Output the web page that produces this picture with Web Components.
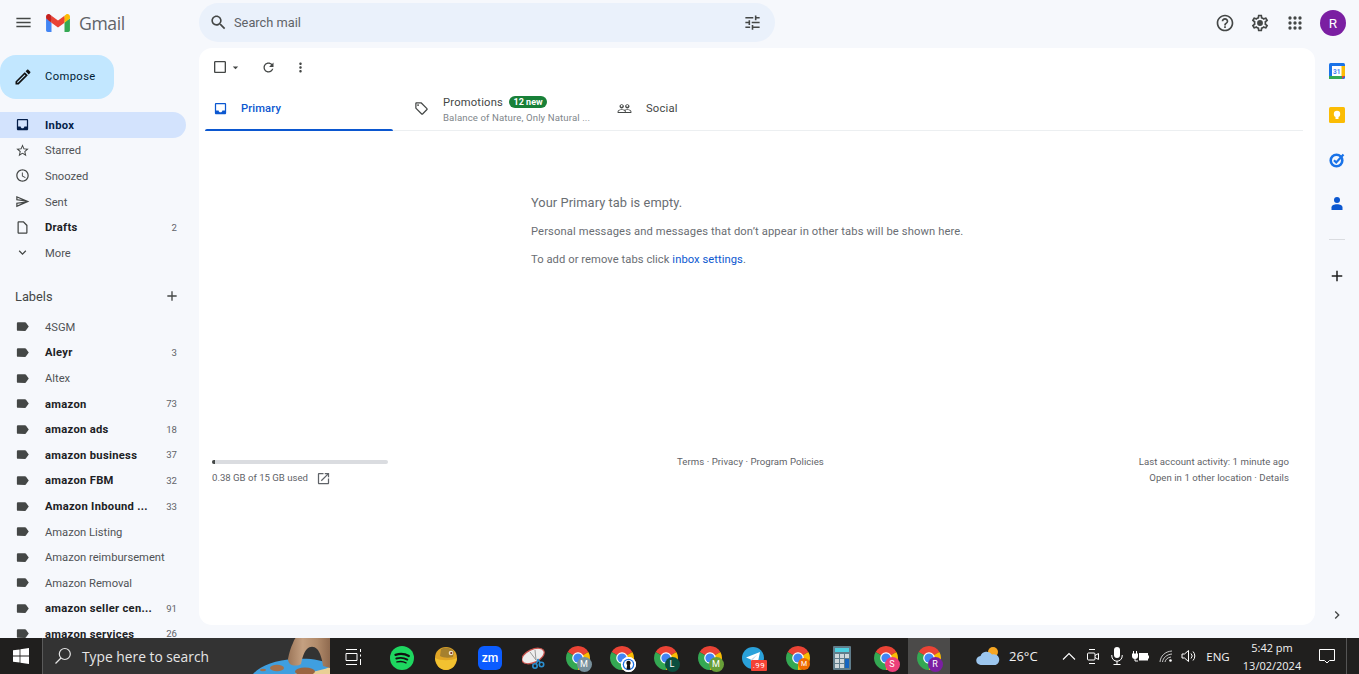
<!DOCTYPE html>
<html lang="en">
<head>
<meta charset="utf-8">
<title>Inbox - Gmail</title>
<style>
html, body { margin: 0; height: 100%; overflow: hidden; background: #f6f8fc; }
body { font-family: Roboto, "Liberation Sans", sans-serif; }
</style>
</head>
<body>
<gmail-shell>
  <app-header slot="header"></app-header>
  <side-bar slot="side"></side-bar>
  <mail-card slot="main"></mail-card>
  <right-rail slot="rail"></right-rail>
</gmail-shell>
<task-bar></task-bar>

<script>
const ICONS = {
  menu: "M3 18h18v-2H3v2zm0-5h18v-2H3v2zm0-7v2h18V6H3z",
  search: "M15.5 14h-.79l-.28-.27C15.41 12.59 16 11.11 16 9.5 16 5.91 13.09 3 9.5 3S3 5.91 3 9.5 5.91 16 9.5 16c1.61 0 3.09-.59 4.23-1.57l.27.28v.79l5 4.99L20.49 19l-4.99-5zm-6 0C7.01 14 5 11.99 5 9.5S7.01 5 9.5 5 14 7.01 14 9.5 11.99 14 9.5 14z",
  tune: "M3 17v2h6v-2H3zM3 5v2h10V5H3zm10 16v-2h8v-2h-8v-2h-2v6h2zM7 9v2H3v2h4v2h2V9H7zm14 4v-2H11v2h10zm-6-4h2V7h4V5h-4V3h-2v6z",
  help: "M11 18h2v-2h-2v2zm1-16C6.48 2 2 6.48 2 12s4.48 10 10 10 10-4.48 10-10S17.52 2 12 2zm0 18c-4.41 0-8-3.59-8-8s3.59-8 8-8 8 3.59 8 8-3.59 8-8 8zm0-14c-2.21 0-4 1.79-4 4h2c0-1.1.9-2 2-2s2 .9 2 2c0 2-3 1.75-3 5h2c0-2.25 3-2.5 3-5 0-2.21-1.79-4-4-4z",
  settings: "M19.43 12.98c.04-.32.07-.64.07-.98 0-.34-.03-.66-.07-.98l2.11-1.65c.19-.15.24-.42.12-.64l-2-3.46c-.09-.16-.26-.25-.44-.25-.06 0-.12.01-.17.03l-2.49 1c-.52-.4-1.08-.73-1.69-.98l-.38-2.65C14.46 2.18 14.25 2 14 2h-4c-.25 0-.46.18-.49.42l-.38 2.65c-.61.25-1.17.59-1.69.98l-2.49-1c-.06-.02-.12-.03-.18-.03-.17 0-.34.09-.43.25l-2 3.46c-.13.22-.07.49.12.64l2.11 1.65c-.04.32-.07.65-.07.98 0 .33.03.66.07.98l-2.11 1.65c-.19.15-.24.42-.12.64l2 3.46c.09.16.26.25.44.25.06 0 .12-.01.17-.03l2.49-1c.52.4 1.08.73 1.69.98l.38 2.65c.03.24.24.42.49.42h4c.25 0 .46-.18.49-.42l.38-2.65c.61-.25 1.17-.59 1.69-.98l2.49 1c.06.02.12.03.18.03.17 0 .34-.09.43-.25l2-3.46c.12-.22.07-.49-.12-.64l-2.11-1.65zm-1.98-1.71c.04.31.05.52.05.73 0 .21-.02.43-.05.73l-.14 1.13.89.7 1.08.84-.7 1.21-1.27-.51-1.04-.42-.9.68c-.43.32-.84.56-1.25.73l-1.06.43-.16 1.13-.2 1.35h-1.4l-.19-1.35-.16-1.13-1.06-.43c-.43-.18-.83-.41-1.23-.71l-.91-.7-1.06.43-1.27.51-.7-1.21 1.08-.84.89-.7-.14-1.13c-.03-.31-.05-.54-.05-.74s.02-.43.05-.73l.14-1.13-.89-.7-1.08-.84.7-1.21 1.27.51 1.04.42.9-.68c.43-.32.84-.56 1.25-.73l1.06-.43.16-1.13.2-1.35h1.39l.19 1.35.16 1.13 1.06.43c.43.18.83.41 1.23.71l.91.7 1.06-.43 1.27-.51.7 1.21-1.07.85-.89.7.14 1.13zM12 8.5a3.5 3.5 0 1 0 0 7 3.5 3.5 0 0 0 0-7z",
  apps: "M6 4a2 2 0 1 0 0 4 2 2 0 0 0 0-4zm6 0a2 2 0 1 0 0 4 2 2 0 0 0 0-4zm6 0a2 2 0 1 0 0 4 2 2 0 0 0 0-4zM6 10a2 2 0 1 0 0 4 2 2 0 0 0 0-4zm6 0a2 2 0 1 0 0 4 2 2 0 0 0 0-4zm6 0a2 2 0 1 0 0 4 2 2 0 0 0 0-4zM6 16a2 2 0 1 0 0 4 2 2 0 0 0 0-4zm6 0a2 2 0 1 0 0 4 2 2 0 0 0 0-4zm6 0a2 2 0 1 0 0 4 2 2 0 0 0 0-4z",
  edit: "M14.06 9.02l.92.92L5.92 19H5v-.92l9.06-9.06M17.66 3c-.25 0-.51.1-.7.29l-1.83 1.83 3.75 3.75 1.83-1.83c.39-.39.39-1.02 0-1.41l-2.34-2.34c-.2-.2-.45-.29-.71-.29zm-3.6 3.19L3 17.25V21h3.75L17.81 9.94l-3.75-3.75z",
  inbox: "M19 3H4.99c-1.1 0-1.98.9-1.98 2L3 19c0 1.1.89 2 1.99 2H19c1.1 0 2-.9 2-2V5c0-1.1-.9-2-2-2zm0 12h-4c0 1.66-1.35 3-3 3s-3-1.34-3-3H4.99V5H19v10z",
  star: "M22 9.24l-7.19-.62L12 2 9.19 8.63 2 9.24l5.46 4.73L5.82 21 12 17.27 18.18 21l-1.63-7.03L22 9.24zM12 15.4l-3.76 2.27 1-4.28-3.32-2.88 4.38-.38L12 6.1l1.71 4.04 4.38.38-3.32 2.88 1 4.28L12 15.4z",
  clock: "M11.99 2C6.47 2 2 6.48 2 12s4.47 10 9.99 10C17.52 22 22 17.52 22 12S17.52 2 11.99 2zM12 20c-4.42 0-8-3.58-8-8s3.58-8 8-8 8 3.58 8 8-3.58 8-8 8zm.5-13H11v6l5.25 3.15.75-1.23-4.5-2.67z",
  send: "M4.01 6.03l7.51 3.22-7.52-1 .01-2.22m7.5 8.72L4 17.97v-2.22l7.51-1M2.01 3L2 10l15 2-15 2 .01 7L23 12 2.01 3z",
  draft: "M14 2H6c-1.1 0-1.99.9-1.99 2L4 20c0 1.1.89 2 1.99 2H18c1.1 0 2-.9 2-2V8l-6-6zm4 18H6V4h7l5 5v11z",
  more: "M16.59 8.59L12 13.17 7.41 8.59 6 10l6 6 6-6z",
  label: "M17.63 5.84C17.27 5.33 16.67 5 16 5L5 5.01C3.9 5.01 3 5.9 3 7v10c0 1.1.9 1.99 2 1.99L16 19c.67 0 1.27-.33 1.63-.84L22 12l-4.37-6.16z",
  add: "M19 13h-6v6h-2v-6H5v-2h6V5h2v6h6v2z",
  refresh: "M17.65 6.35C16.2 4.9 14.21 4 12 4c-4.42 0-7.99 3.58-7.99 8s3.57 8 7.99 8c3.73 0 6.84-2.55 7.73-6h-2.08c-.82 2.33-3.04 4-5.65 4-3.31 0-6-2.69-6-6s2.69-6 6-6c1.66 0 3.14.69 4.22 1.78L13 11h7V4l-2.35 2.35z",
  dots: "M12 8c1.1 0 2-.9 2-2s-.9-2-2-2-2 .9-2 2 .9 2 2 2zm0 2c-1.1 0-2 .9-2 2s.9 2 2 2 2-.9 2-2-.9-2-2-2zm0 6c-1.1 0-2 .9-2 2s.9 2 2 2 2-.9 2-2-.9-2-2-2z",
  check: "M19 5v14H5V5h14m0-2H5c-1.1 0-2 .9-2 2v14c0 1.1.9 2 2 2h14c1.1 0 2-.9 2-2V5c0-1.1-.9-2-2-2z",
  caret: "M7 10l5 5 5-5z",
  tag: "M21.41 11.58l-9-9C12.05 2.22 11.55 2 11 2H4c-1.1 0-2 .9-2 2v7c0 .55.22 1.05.59 1.42l9 9c.36.36.86.58 1.41.58.55 0 1.05-.22 1.41-.59l7-7c.37-.36.59-.86.59-1.41 0-.55-.23-1.06-.59-1.42zM13 20.01L4 11V4h7v-.01l9 9-7 7.02zM6.5 5a1.5 1.5 0 1 0 0 3 1.5 1.5 0 0 0 0-3z",
  people: "M16.5 13c-1.2 0-3.07.34-4.5 1-1.43-.67-3.3-1-4.5-1C5.33 13 1 14.08 1 16.25V19h22v-2.75c0-2.17-4.33-3.25-6.5-3.25zm-4 4.5h-10v-1.25c0-.54 2.56-1.75 5-1.75s5 1.21 5 1.75v1.25zm9 0H14v-1.25c0-.46-.2-.86-.52-1.22.88-.3 1.96-.53 3.02-.53 2.44 0 5 1.21 5 1.75v1.25zM7.5 12c1.93 0 3.5-1.57 3.5-3.5S9.43 5 7.5 5 4 6.57 4 8.5 5.57 12 7.5 12zm0-5.5c.83 0 1.5.67 1.5 1.5s-.67 1.5-1.5 1.5S6 8.83 6 8s.67-1.5 1.5-1.5zm9 5.5c1.93 0 3.5-1.57 3.5-3.5S18.43 5 16.5 5 13 6.57 13 8.5s1.57 3.5 3.5 3.5zm0-5.5c.83 0 1.5.67 1.5 1.5s-.67 1.5-1.5 1.5S15 8.83 15 8s.67-1.5 1.5-1.5z",
  launch: "M19 19H5V5h7V3H5c-1.11 0-2 .9-2 2v14c0 1.1.89 2 2 2h14c1.1 0 2-.9 2-2v-7h-2v7zM14 3v2h3.59l-9.83 9.83 1.41 1.41L19 6.41V10h2V3h-7z",
  chevron: "M10 6L8.59 7.41 13.17 12l-4.58 4.59L10 18l6-6z"
};

class GmIcon extends HTMLElement {
  connectedCallback() {
    const size = this.getAttribute("size") || 15;
    const d = ICONS[this.getAttribute("name")];
    this.attachShadow({ mode: "open" }).innerHTML = `
<style>
:host { display: inline-flex; flex: none; width: ${size}px; height: ${size}px; }
svg { width: 100%; height: 100%; fill: currentColor; display: block; }
</style>
<svg viewBox="0 0 24 24"><path d="${d}"/></svg>`;
  }
}
customElements.define("gm-icon", GmIcon);

class GmailShell extends HTMLElement {
  constructor() {
    super();
    this.attachShadow({ mode: "open" }).innerHTML = `
<style>
:host { display: flex; flex-direction: column; height: 638px; overflow: hidden; background: #f6f8fc; }
.body { flex: 1; min-height: 0; display: flex; }
</style>
<slot name="header"></slot>
<div class="body">
  <slot name="side"></slot>
  <slot name="main"></slot>
  <slot name="rail"></slot>
</div>`;
  }
}
customElements.define("gmail-shell", GmailShell);

class AppHeader extends HTMLElement {
  constructor() {
    super();
    this.attachShadow({ mode: "open" }).innerHTML = `
<style>
:host { display: flex; flex: none; height: 48px; align-items: flex-start; color: #444746; }
.brand { width: 199px; height: 45px; flex: none; display: flex; align-items: center; padding-left: 14px; box-sizing: border-box; }
.logo { width: 24px; height: 18px; margin-left: 13px; }
.word { font: 400 17.6px "Open Sans", Roboto, sans-serif; color: #5f6368; margin-left: 9px; letter-spacing: -0.4px; }
.search { width: 576px; height: 39px; margin-top: 3px; border-radius: 20px; background: #eaf1fb; display: flex; align-items: center; padding: 0 13px 0 10px; box-sizing: border-box; }
.search span { font-size: 12.8px; color: #5f6368; margin-left: 6px; flex: 1; }
.actions { margin-left: auto; display: flex; align-items: center; height: 45px; padding-right: 13px; }
.actions gm-icon { margin-right: 15px; }
.actions gm-icon:last-of-type { margin-right: 15px; }
.avatar { width: 26px; height: 26px; border-radius: 50%; background: #7b1fa2; color: #fff; display: flex; align-items: center; justify-content: center; font-size: 13.5px; }
</style>
<div class="brand">
  <gm-icon name="menu" size="19"></gm-icon>
  <svg class="logo" viewBox="0 0 256 193">
    <path fill="#4285F4" d="M58.182 192.05V93.14L27.507 65.077 0 49.504v125.091c0 9.658 7.825 17.455 17.455 17.455h40.727z"/>
    <path fill="#34A853" d="M197.818 192.05h40.727c9.659 0 17.455-7.826 17.455-17.455V49.505l-31.156 17.837-27.026 25.798v98.91z"/>
    <path fill="#EA4335" d="M58.182 93.14l-4.174-38.647 4.174-36.989L128 69.868l69.818-52.364 4.669 34.992-4.669 40.644L128 145.504z"/>
    <path fill="#FBBC04" d="M197.818 17.504V93.14L256 49.504V26.231c0-21.585-24.64-33.89-41.89-20.945l-16.292 12.218z"/>
    <path fill="#C5221F" d="M0 49.504l26.759 20.07L58.182 93.14V17.504L41.89 5.286C24.61-7.66 0 4.646 0 26.23v23.273z"/>
  </svg>
  <span class="word">Gmail</span>
</div>
<div class="search">
  <gm-icon name="search" size="19"></gm-icon>
  <span>Search mail</span>
  <gm-icon name="tune" size="19"></gm-icon>
</div>
<div class="actions">
  <gm-icon name="help" size="20"></gm-icon>
  <gm-icon name="settings" size="20"></gm-icon>
  <gm-icon name="apps" size="20"></gm-icon>
  <div class="avatar">R</div>
</div>`;
  }
}
customElements.define("app-header", AppHeader);

class NavItem extends HTMLElement {
  connectedCallback() {
    const count = this.getAttribute("count") || "";
    this.attachShadow({ mode: "open" }).innerHTML = `
<style>
:host { display: flex; flex: none; align-items: center; height: 25.6px; width: 186px; box-sizing: border-box; padding: 0 9px 0 15px; font-size: 11.2px; color: #505356; border-radius: 0 13px 13px 0; }
:host([bold]) { font-weight: 700; color: #202124; }
:host([bold]) .text { letter-spacing: 0.3px; }
:host([active]) { background: #d3e3fd; color: #041e49; }
.text { margin-left: 15px; flex: 1; white-space: nowrap; padding-top: 1px; }
.count { font-size: 9.6px; font-weight: 400; color: #5f6368; }
gm-icon { color: #444746; }
:host([active]) gm-icon { color: #041e49; }
</style>
<gm-icon name="${this.getAttribute("icon")}"></gm-icon>
<span class="text"><slot></slot></span>
<span class="count">${count}</span>`;
  }
}
customElements.define("nav-item", NavItem);

class SideBar extends HTMLElement {
  constructor() {
    super();
    this.attachShadow({ mode: "open" }).innerHTML = `
<style>
:host { display: block; flex: none; width: 199px; overflow: hidden; color: #444746; }
.compose { width: 114px; height: 44px; margin-top: 7px; margin-bottom: 13px; border-radius: 16px; background: #c2e7ff; display: flex; align-items: center; padding-left: 15px; box-sizing: border-box; color: #001d35; font-size: 11.2px; letter-spacing: 0.4px; }
.compose span { margin-left: 15px; margin-top: -2px; }
.heading { display: flex; align-items: center; justify-content: space-between; height: 26px; margin-top: 17.5px; margin-bottom: 5px; width: 186px; box-sizing: border-box; padding: 0 6px 0 15px; font-size: 12.8px; }
</style>
<div class="compose"><gm-icon name="edit" size="20" style="margin-left:-2px;margin-right:-3px;color:#111"></gm-icon><span>Compose</span></div>
<nav-item icon="inbox" bold active>Inbox</nav-item>
<nav-item icon="star">Starred</nav-item>
<nav-item icon="clock">Snoozed</nav-item>
<nav-item icon="send">Sent</nav-item>
<nav-item icon="draft" bold count="2">Drafts</nav-item>
<nav-item icon="more">More</nav-item>
<div class="heading"><span>Labels</span><gm-icon name="add" size="16"></gm-icon></div>
<nav-item icon="label">4SGM</nav-item>
<nav-item icon="label" bold count="3">Aleyr</nav-item>
<nav-item icon="label">Altex</nav-item>
<nav-item icon="label" bold count="73">amazon</nav-item>
<nav-item icon="label" bold count="18">amazon ads</nav-item>
<nav-item icon="label" bold count="37">amazon business</nav-item>
<nav-item icon="label" bold count="32">amazon FBM</nav-item>
<nav-item icon="label" bold count="33">Amazon Inbound ...</nav-item>
<nav-item icon="label">Amazon Listing</nav-item>
<nav-item icon="label">Amazon reimbursement</nav-item>
<nav-item icon="label">Amazon Removal</nav-item>
<nav-item icon="label" bold count="91">amazon seller cen...</nav-item>
<nav-item icon="label" bold count="26">amazon services</nav-item>`;
  }
}
customElements.define("side-bar", SideBar);

class InboxTab extends HTMLElement {
  connectedCallback() {
    this.attachShadow({ mode: "open" }).innerHTML = `
<style>
:host { display: flex; flex: none; align-items: center; height: 45px; box-sizing: border-box; padding-left: 8px; color: #444746; font-size: 11.2px; letter-spacing: 0.2px; position: relative; }
:host([active]) { color: #0b57d0; font-weight: 500; letter-spacing: 0.1px; }
:host([active])::after { content: ""; position: absolute; left: 0; right: 0; bottom: 0; height: 2px; background: #0b57d0; border-radius: 2px 2px 0 0; }
.label { margin-left: 14px; }
:host([active]) .label { margin-left: 13px; }
</style>
<gm-icon name="${this.getAttribute("icon")}" size="15"></gm-icon>
<div class="label"><slot></slot></div>`;
  }
}
customElements.define("inbox-tab", InboxTab);

class MailCard extends HTMLElement {
  constructor() {
    super();
    this.attachShadow({ mode: "open" }).innerHTML = `
<style>
:host { display: flex; flex-direction: column; flex: 1; min-width: 0; margin-bottom: 13px; background: #fff; border-radius: 13px; color: #5f6368; font-size: 11.2px; }
.tools { height: 38px; flex: none; display: flex; align-items: center; color: #444746; padding-left: 13px; }
.tabs { display: flex; margin: 0 12px 0 6px; border-bottom: 1px solid #eceff1; height: 44px; }
.primary { width: 188px; margin-bottom: -1px; }
.promo { width: 203px; margin-left: 13px; }
.promo .top { display: flex; align-items: center; color: #444746; padding-top: 1.5px; }
.badge { background: #188038; color: #fff; font-size: 9px; font-weight: 700; border-radius: 7px; height: 12px; line-height: 12px; padding: 0 4.5px; margin-left: 6px; letter-spacing: 0; }
.sub { font-size: 9.6px; color: #80868b; margin-top: 3px; white-space: nowrap; letter-spacing: 0.12px; }
.empty { padding: 64px 0 0 332px; flex: none; color: #6a6e73; }
h2 { font-size: 12.8px; font-weight: 400; margin: 0; line-height: 16px; letter-spacing: 0.08px; }
p { margin: 0; line-height: 14px; }
.para1 { margin-top: 14px; letter-spacing: 0.12px; }
.para2 { margin-top: 14px; letter-spacing: 0.06px; }
a { color: #0b57d0; text-decoration: none; }
footer { display: flex; padding: 0 26px 0 13px; margin-top: 190px; font-size: 9.6px; color: #5f6368; line-height: 16px; }
.quota { width: 176px; flex: none; }
.meter { height: 4px; margin: 3px 0 6px; background: #dadce0; border-radius: 2px; overflow: hidden; }
.meter div { width: 3px; height: 100%; background: #444746; }
.used { display: flex; align-items: center; gap: 8px; }
.center { flex: none; margin: -3px 0 0 289px; letter-spacing: 0.05px; }
.right { text-align: right; margin: -3px 0 0 auto; letter-spacing: 0.05px; }
.right div { height: 16px; }
</style>
<div class="tools">
  <gm-icon name="check" size="16"></gm-icon>
  <gm-icon name="caret" size="13" style="margin-left:1px"></gm-icon>
  <gm-icon name="refresh" size="15" style="margin-left:19px"></gm-icon>
  <gm-icon name="dots" size="15" style="margin-left:17px"></gm-icon>
</div>
<div class="tabs">
  <inbox-tab class="primary" icon="inbox" active>Primary</inbox-tab>
  <inbox-tab class="promo" icon="tag">
    <div class="top">Promotions<span class="badge">12 new</span></div>
    <div class="sub">Balance of Nature, Only Natural ...</div>
  </inbox-tab>
  <inbox-tab icon="people">Social</inbox-tab>
</div>
<div class="empty">
  <h2>Your Primary tab is empty.</h2>
  <p class="para1">Personal messages and messages that don’t appear in other tabs will be shown here.</p>
  <p class="para2">To add or remove tabs click <a href="#">inbox settings</a>.</p>
</div>
<footer>
  <div class="quota">
    <div class="meter"><div></div></div>
    <div class="used">0.38 GB of 15 GB used <gm-icon name="launch" size="15"></gm-icon></div>
  </div>
  <div class="center">Terms · Privacy · Program Policies</div>
  <div class="right"><div>Last account activity: 1 minute ago</div><div>Open in 1 other location · Details</div></div>
</footer>`;
  }
}
customElements.define("mail-card", MailCard);

class RightRail extends HTMLElement {
  constructor() {
    super();
    this.attachShadow({ mode: "open" }).innerHTML = `
<style>
:host { display: flex; flex-direction: column; align-items: center; flex: none; width: 44px; color: #1f1f1f; height: 575px; box-sizing: border-box; }
svg { width: 16px; height: 16px; display: block; flex: none; }
.first { margin-top: 15px; }
.gap { margin-top: 28.4px; }
hr { width: 16px; height: 1px; border: 0; background: #dadce0; margin: 27px 0 27px; flex: none; }
.end { margin-top: auto; color: #444746; }
</style>
<svg class="first" viewBox="0 0 16 16">
  <rect width="16" height="16" rx="1.5" fill="#1a73e8"/>
  <rect x="12" y="3" width="4" height="10" fill="#fbbc04"/>
  <rect y="13" width="13" height="3" fill="#34a853"/>
  <path d="M13 13h3l-3 3z" fill="#ea4335"/>
  <rect x="3" y="3" width="9.5" height="10" fill="#fff"/>
  <text x="7.7" y="10.6" font-family="Roboto" font-size="6.5" font-weight="700" text-anchor="middle" fill="#4285f4">31</text>
</svg>
<svg class="gap" viewBox="0 0 16 16">
  <rect width="16" height="16" rx="1.5" fill="#fbbc04"/>
  <circle cx="8" cy="7" r="3.2" fill="#fff"/><rect x="6.5" y="10" width="3" height="2" fill="#fff"/>
</svg>
<svg class="gap" viewBox="0 0 16 16">
  <circle cx="7.5" cy="8.5" r="5.8" fill="none" stroke="#1a73e8" stroke-width="2.6"/>
  <path d="M5 8.3l2.2 2.2L14.5 2.5" fill="none" stroke="#1a73e8" stroke-width="2.2"/>
</svg>
<svg class="gap" viewBox="0 0 16 16">
  <circle cx="8" cy="4" r="3" fill="#0b57d0"/>
  <path d="M2.500 14v-2.500C2.500 9.500 5 8.300 8 8.300s5.500 1.200 5.500 3.200V14z" fill="#0b57d0"/>
</svg>
<hr>
<gm-icon name="add" size="18"></gm-icon>
<gm-icon class="end" name="chevron" size="16"></gm-icon>`;
  }
}
customElements.define("right-rail", RightRail);

class TaskChrome extends HTMLElement {
  connectedCallback() {
    const badge = this.getAttribute("badge") || "";
    const color = this.getAttribute("color") || "#777";
    const small = this.hasAttribute("small");
    this.attachShadow({ mode: "open" }).innerHTML = `
<style>
:host { display: block; width: 24px; height: 24px; position: relative; }
svg { width: 24px; height: 24px; display: block; }
.badge { position: absolute; left: ${small ? 12 : 10.5}px; top: ${small ? 12 : 10.5}px; width: ${small ? 12 : 15}px; height: ${small ? 12 : 15}px; border-radius: 50%; background: ${color}; color: #fff; font: 400 ${small ? 7 : 9}px/${small ? 12 : 15}px Roboto, sans-serif; text-align: center; }
</style>
<svg viewBox="0 0 24 24">
  <path fill="#ea4335" d="M12 12L1.61 6A12 12 0 0 1 22.39 6z"/>
  <path fill="#fbbc04" d="M12 12L22.39 6A12 12 0 0 1 12 24z"/>
  <path fill="#34a853" d="M12 12L12 24A12 12 0 0 1 1.61 6z"/>
  <circle cx="12" cy="12" r="5.8" fill="#fff"/>
  <circle cx="12" cy="12" r="4.6" fill="#4285f4"/>
</svg>
<div class="badge"><slot>${badge}</slot></div>`;
  }
}
customElements.define("task-chrome", TaskChrome);

class TaskBar extends HTMLElement {
  constructor() {
    super();
    this.attachShadow({ mode: "open" }).innerHTML = `
<style>
:host { display: flex; height: 36px; background: #201f1e; color: #f2f2f2; font-family: "Open Sans", "Liberation Sans", sans-serif; }
.start { width: 42px; flex: none; display: flex; align-items: center; justify-content: center; }
.box { width: 288px; flex: none; background: #333; border-left: 1px solid #5a5a5a; box-sizing: border-box; display: flex; align-items: center; padding-left: 11px; position: relative; overflow: hidden; }
.box span { margin-left: 10px; font-size: 13.8px; color: #e6e6e6; }
.doodle { position: absolute; right: 0; top: 0; width: 80px; height: 36px; }
.apps { display: flex; flex: none; }
.slot { width: 44px; flex: none; display: flex; justify-content: center; padding-top: 8px; box-sizing: border-box; height: 36px; position: relative; }
.slot.tv { width: 46px; margin-right: 4px; padding-top: 11px; }
.slot.tv svg { width: 17px; height: 16px; }
.slot.on { background: #4b4a49; width: 42px; margin-right: 2px; }
.slot svg { width: 24px; height: 24px; display: block; }
.tele { position: absolute; left: 19px; top: 22px; width: 16px; height: 11px; background: #f44336; color: #fff; font: 400 8px/11px Roboto, sans-serif; text-align: center; border-radius: 1px; letter-spacing: 0.5px; }
.tray { margin-left: auto; display: flex; align-items: center; flex: none; height: 36px; }
.tray > div { display: flex; align-items: center; justify-content: center; height: 36px; flex: none; }
.temp { font-size: 13px; }
.lang { font-size: 11.5px; }
.time { flex-direction: column; font-size: 11px; line-height: 18px; white-space: nowrap; padding-top: 2px; box-sizing: border-box; }
</style>
<div class="start">
  <svg width="16" height="16" viewBox="0 0 16 16" fill="#fff"><path d="M0 2.300l6.600-.9v6.200H0zM7.400 1.300L16 0v7.600H7.400zM0 8.400h6.600v6.200L0 13.700zM7.400 8.400H16V16l-8.600-1.200z"/></svg>
</div>
<div class="box">
  <svg width="18" height="18" viewBox="0 0 18 18" fill="none" stroke="#e6e6e6" stroke-width="1.200"><circle cx="10.800" cy="7" r="5.500"/><path d="M7 11L1.500 16.500"/></svg>
  <span>Type here to search</span>
  <svg class="doodle" viewBox="0 0 80 36">
    <defs><linearGradient id="hand" x1="0" x2="1" y1="0" y2="0"><stop offset="0" stop-color="#9c7659"/><stop offset=".35" stop-color="#c4a081"/><stop offset=".7" stop-color="#b08a6a"/><stop offset="1" stop-color="#8f6a4f"/></linearGradient></defs>
    <path d="M3 36C10 28 25 22 45 21c15-1 27 1 35 5v10z" fill="#3f9fe0"/>
    <path d="M44 36c8-1 24-2 36-7v7z" fill="#e9cf95"/>
    <ellipse cx="27" cy="30" rx="7" ry="3.300" fill="#a5714c"/>
    <ellipse cx="13" cy="32" rx="3" ry="1.200" fill="#a5714c"/>
    <ellipse cx="55" cy="33.500" rx="10" ry="4" fill="#9b6541"/>
    <path d="M38 21c1-6 3-12 5-16 1-3 2-5 3-5h34v30l-7-2c-1-7-3-14-6-17-3-3-7-3-10 0-3 3-5 9-6 15-3 2-8 2-11 0-1-1-2-3-2-5z" fill="url(#hand)"/>
  </svg>
</div>
<div class="apps">
  <div class="slot tv"><svg viewBox="0 0 17 16" fill="none" stroke="#fff" stroke-width="1"><path d="M1 .5h11M1 15.500h11M1 4.500h11v7H1zM15.500 0v3M15.500 5.500v2M15.500 10v6"/></svg></div>
  <div class="slot"><svg viewBox="0 0 24 24"><circle cx="12" cy="12" r="12" fill="#1ed760"/><g fill="none" stroke="#111" stroke-linecap="round"><path stroke-width="2.300" d="M5.500 8.800c4.500-1.300 9.500-1 13.300 1.200"/><path stroke-width="1.900" d="M6.300 12.500c3.700-1 7.800-.7 11 1.100"/><path stroke-width="1.500" d="M7 15.900c3-.8 6.400-.6 9 .9"/></g></svg></div>
  <div class="slot"><svg viewBox="0 0 24 24"><path d="M1 12C1 5 6 1 12 1s11 4 11 11-5 12-11 12S1 19 1 12z" fill="#e0a526"/><path d="M1 12c6 3 16 3 22 0-1 7-5 12-11 12S2 19 1 12z" fill="#f2c230"/><path d="M7 3c4-2 10-2 13 3l-1 5c-4 1-10 1-13-1z" fill="#a5802e"/><circle cx="17" cy="7" r="2.300" fill="#efe3c8"/><circle cx="17.300" cy="7" r="1.100" fill="#7a2a1a"/></svg></div>
  <div class="slot"><svg viewBox="0 0 24 24"><rect width="24" height="24" rx="6" fill="#0b5cff"/><text x="12" y="15.500" font-family="Roboto" font-size="12" font-weight="500" text-anchor="middle" fill="#fff">zm</text></svg></div>
  <div class="slot"><svg viewBox="0 0 24 24"><ellipse cx="11" cy="10" rx="12" ry="6.500" transform="rotate(-25 11 10)" fill="#eee" stroke="#c9524c" stroke-width="1.200"/><path d="M13 4l1 10M8 6l6 8" stroke="#999" stroke-width="1"/><g fill="none" stroke="#2a8fd0" stroke-width="1.600"><circle cx="13" cy="20" r="2.200"/><circle cx="19.500" cy="18.500" r="2.200"/><path d="M14 18l2-4M18.500 17l-3-4"/></g></svg></div>
  <div class="slot"><task-chrome badge="M" color="#78909c"></task-chrome></div>
  <div class="slot"><task-chrome color="#fff"><svg viewBox="0 0 15 15" style="width:15px;height:15px"><circle cx="7.500" cy="7.500" r="7.500" fill="#fff"/><circle cx="7.500" cy="7.500" r="5.800" fill="#1a73e8"/><circle cx="7.500" cy="7.500" r="4.500" fill="#fff"/><circle cx="7.500" cy="6" r="2.200" fill="#111"/><path d="M6.300 7h2.400l.8 5.500h-4z" fill="#111"/></svg></task-chrome></div>
  <div class="slot"><task-chrome badge="L" color="#0b4f3f"></task-chrome></div>
  <div class="slot"><task-chrome badge="M" color="#689f38"></task-chrome></div>
  <div class="slot"><svg viewBox="0 0 24 24"><circle cx="11" cy="12" r="11" fill="#2aa1da"/><path d="M4 11.500l14-5.500-2.500 12-4-3-2 2-.7-3.500z" fill="#fff"/><path d="M8.800 13.500l6.500-5-5 6z" fill="#c8daea"/></svg><span class="tele">.99</span></div>
  <div class="slot"><task-chrome badge="M" color="#ef6c00" small></task-chrome></div>
  <div class="slot"><svg viewBox="0 0 24 24"><rect x="3" width="18" height="24" rx="1" fill="#607d8b"/><rect x="5" y="2" width="14" height="4" fill="#4dd0e1"/><g fill="#cfd8dc"><rect x="5" y="8" width="4" height="4"/><rect x="10" y="8" width="4" height="4"/><rect x="15" y="8" width="4" height="4"/><rect x="5" y="13" width="4" height="4"/><rect x="10" y="13" width="4" height="4"/><rect x="5" y="18" width="4" height="4"/><rect x="10" y="18" width="4" height="4"/></g><rect x="15" y="13" width="4" height="9" fill="#1565c0"/></svg></div>
  <div class="slot"><task-chrome badge="S" color="#ec407a"></task-chrome></div>
  <div class="slot on"><task-chrome badge="R" color="#7b1fa2"></task-chrome></div>
</div>
<div class="tray">
  <div style="width:74px;padding-left:16px;justify-content:flex-start;gap:8px">
    <svg width="25" height="20" viewBox="0 0 25 20"><circle cx="17" cy="6" r="5" fill="#f6a623"/><path d="M5 19a4.500 4.500 0 0 1-.5-9A6.500 6.500 0 0 1 16 8.500a5.300 5.300 0 0 1 3.500 10.500z" fill="#9cc6ee"/></svg>
    <span class="temp">26°C</span>
  </div>
  <div style="width:24px;margin-left:7px;margin-right:-1px"><svg width="14" height="8" viewBox="0 0 14 8" fill="none" stroke="#fff" stroke-width="1.100"><path d="M1 7.500l6-6 6 6"/></svg></div>
  <div style="width:25px"><svg width="14" height="17" viewBox="0 0 14 17" fill="none" stroke="#fff" stroke-width="1"><path d="M3 1.500h6M3 15.500h6"/><rect x="1.500" y="5" width="7.500" height="7" rx="1"/><path d="M9 7.500l3.500-2v6l-3.500-2"/></svg></div>
  <div style="width:23px"><svg width="12" height="18" viewBox="0 0 12 18" fill="#fff"><rect x="3" y="0" width="6" height="11" rx="3"/><path d="M.8 8v1a5.200 5.200 0 0 0 10.400 0V8M6 14v3M2.500 17.500h7" fill="none" stroke="#fff"/></svg></div>
  <div style="width:25px"><svg width="17" height="11" viewBox="0 0 17 11"><path d="M1.500 0v3M4.500 0v3M3 7.500V10h3" fill="none" stroke="#fff"/><path d="M0 2.500h6V5a3 3 0 0 1-6 0z" fill="#fff"/><rect x="7.500" y="2.500" width="8" height="6.500" fill="#fff" stroke="#fff"/><rect x="16" y="4.500" width="1" height="3" fill="#fff"/></svg></div>
  <div style="width:25px"><svg width="14" height="13" viewBox="0 0 14 13" fill="none" stroke="#ddd" stroke-width=".9"><path d="M1 12C1.500 6 6 1.500 13 1"/><path d="M3.500 12c.5-4 4-7.500 9.500-8"/><path d="M6 12c.5-2.500 2.500-4.500 6-5"/><circle cx="11.500" cy="10.500" r="1.300" fill="#fff" stroke="none"/></svg></div>
  <div style="width:22px"><svg width="17" height="14" viewBox="0 0 17 14" fill="none" stroke="#fff"><path d="M1 5h2.500L7.500 1.500v11L3.500 9H1z"/><path d="M10 4.500a3.500 3.500 0 0 1 0 5M12 2.500a6.500 6.500 0 0 1 0 9"/></svg></div>
  <div class="lang" style="width:36px">ENG</div>
  <div class="time" style="width:72px"><span>5:42 pm</span><span>13/02/2024</span></div>
  <div style="width:38px"><svg width="16" height="16" viewBox="0 0 16 16" fill="none" stroke="#fff"><path d="M.5 1.500h15v11h-5L8 15l-2.500-2.500h-5z"/></svg></div>
  <div style="width:13px;justify-content:flex-start"><div style="width:1px;height:36px;background:#555"></div></div>
</div>`;
  }
}
customElements.define("task-bar", TaskBar);
</script>
</body>
</html>
